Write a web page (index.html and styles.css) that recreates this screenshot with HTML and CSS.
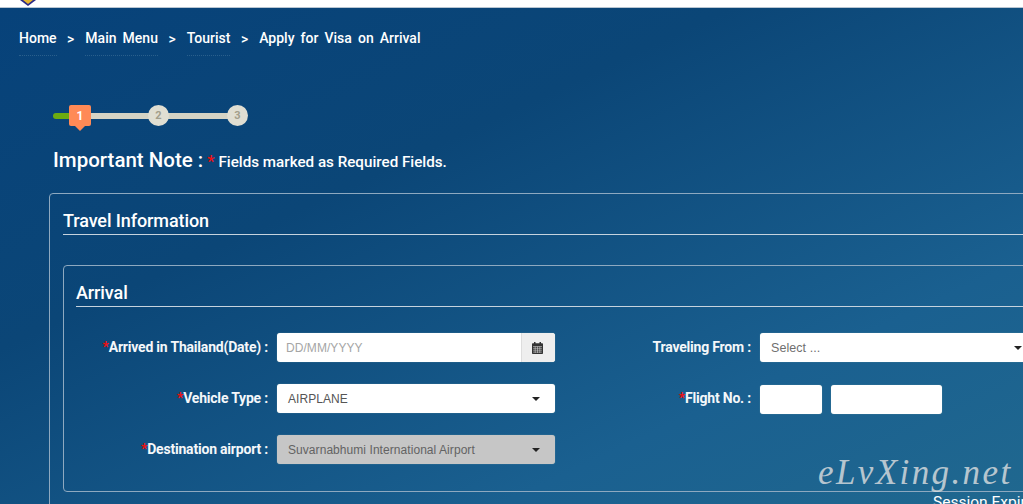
FILE: index.html
```html
<!DOCTYPE html>
<html lang="en">
<head>
<meta charset="utf-8">
<title>Apply for Visa on Arrival</title>
<link rel="stylesheet" href="styles.css">
</head>
<body>
<header class="topbar">
  <svg class="crest" width="16" height="6" viewBox="0 0 16 6"><path d="M0 0H16L8 6Z" fill="#2b2a86"/><path d="M3 0H13L8 4Z" fill="#e8b730"/></svg>
</header>
<main class="page">
  <nav class="crumbs">
    <a class="crumb-link">Home</a><span class="sep">&gt;</span>
    <a class="crumb-link">Main Menu</a><span class="sep">&gt;</span>
    <a class="crumb-link">Tourist</a><span class="sep">&gt;</span>
    <span class="crumb">Apply for Visa on Arrival</span>
  </nav>
  <div class="stepper">
    <div class="progress"></div>
    <div class="step step-active">1</div>
    <div class="step step-2">2</div>
    <div class="step step-3">3</div>
  </div>
  <p class="note"><span class="note-title">Important Note :</span> <span class="req">*</span> <span class="note-text">Fields marked as Required Fields.</span></p>
  <section class="panel">
    <h2 class="panel-title">Travel Information</h2>
    <section class="panel inner">
      <h3 class="panel-title small">Arrival</h3>
      <div class="form">
        <div class="col">
          <div class="row">
            <label class="lab"><span class="req">*</span>Arrived in Thailand(Date) :</label>
            <div class="field date"><span class="ph">DD/MM/YYYY</span><span class="addon">
              <svg width="11" height="12" viewBox="0 0 11 12"><path fill="#333" d="M0 2.2C0 1.6.4 1.2 1 1.2h1V0h1.5v1.2h4V0H9v1.2h1c.6 0 1 .4 1 1V11c0 .6-.4 1-1 1H1c-.6 0-1-.4-1-1Z"/><path fill="#e6e6e6" d="M1 4.2h9v.5H1Z"/><path stroke="#e6e6e6" stroke-width=".5" fill="none" d="M1 6.3h9M1 8.2h9M1 10.1h9M3.2 4.5V11M5.5 4.5V11M7.8 4.5V11"/></svg>
            </span></div>
          </div>
          <div class="row">
            <label class="lab"><span class="req">*</span>Vehicle Type :</label>
            <div class="field select"><span>AIRPLANE</span><i class="caret"></i></div>
          </div>
          <div class="row">
            <label class="lab"><span class="req">*</span>Destination airport :</label>
            <div class="field select disabled"><span>Suvarnabhumi International Airport</span><i class="caret"></i></div>
          </div>
        </div>
        <div class="col col-right">
          <div class="row">
            <label class="lab lab-right">Traveling From :</label>
            <div class="field select wide"><span class="ph-dark">Select ...</span><i class="caret"></i></div>
          </div>
          <div class="row">
            <label class="lab lab-right"><span class="req">*</span>Flight No. :</label>
            <div class="field short"></div>
            <div class="field medium"></div>
          </div>
        </div>
      </div>
    </section>
  </section>
  <div class="session">Session Expired</div>
  <div class="watermark">eLvXing.net</div>
</main>
</body>
</html>
```
FILE: styles.css
```css
* { box-sizing: border-box; }
html, body { margin: 0; height: 504px; overflow: hidden; }
body { font-family: Roboto, "Liberation Sans", sans-serif; color: #fff; width: 1023px; }
.topbar { height: 8px; background: #fff; border-bottom: 1px solid #b9c6d2; padding-left: 20px; }
.crest { display: block; }
.page { position: relative; height: 496px; padding: 0 0 0 49px; background: linear-gradient(155deg, #07427a 0%, #0b4677 35%, #1a6090 75%, #20688f 100%); overflow: hidden; }
.crumbs { display: flex; align-items: flex-start; margin-left: -30px; padding-top: 20px; height: 97px; font-size: 14px; font-weight: 500; line-height: 20px; word-spacing: 2.6px; }
.crumb-link { border-bottom: 1px dotted #2a5f8c; height: 28px; }
.sep { margin: 1px 11px 0 10.5px; }
.stepper { position: relative; width: 196px; height: 21px; margin-left: 4px; }
.progress { position: absolute; left: 0; right: 2px; top: 8px; height: 6px; border-radius: 3px; background: linear-gradient(90deg, #6cab10 0 20px, #d5d3c4 20px); }
.step { position: absolute; top: 0; width: 21px; height: 21px; border-radius: 50%; background: #e0ded2; color: #a39f8c; font-size: 11px; font-weight: 700; text-align: center; line-height: 21px; }
.step-2 { left: 95px; }
.step-3 { left: 174px; }
.step-active { left: 16px; width: 22px; border-radius: 2px; background: #ff8a56; color: #fff; font-size: 12px; line-height: 22px; height: 21px; }
.step-active::after { content: ""; position: absolute; left: 6px; top: 21px; border: 5px solid transparent; border-bottom: 0; border-top-color: #ff8a56; }
.note { margin: 20px 0 0 4px; height: 47px; line-height: 28px; white-space: nowrap; }
.note-title { font-size: 20.5px; font-weight: 500; }
.note-text { font-size: 15.2px; font-weight: 500; }
.req { color: #f00f0f; font-weight: 700; }
.panel { border: 1px solid #8ea9c0; border-radius: 4px; width: 1100px; padding: 12px 13px 0; height: 400px; }
.panel-title { margin: 0; font-size: 18px; font-weight: 500; line-height: 30px; height: 29px; border-bottom: 1px solid #c6d3de; letter-spacing: -.1px; }
.inner { margin-top: 30px; width: 1060px; height: 227px; padding: 12px 12px 0; }
.small { line-height: 29px; }
.form { display: flex; margin-top: 26px; }
.col { width: 479px; }
.col-right { width: auto; margin-left: 5px; }
.row { display: flex; align-items: flex-start; height: 51px; }
.lab { width: 192px; margin-right: 9px; padding-top: 6px; font-size: 14px; font-weight: 700; line-height: 16px; text-align: right; white-space: nowrap; letter-spacing: -.2px; color: #f4f7fa; }
.lab-right { width: 191px; margin-right: 9px; }
.field { height: 29px; background: #fff; border-radius: 3px; color: #555; font-family: "Liberation Sans", sans-serif; font-size: 12px; letter-spacing: .06px; line-height: 28px; display: flex; justify-content: space-between; align-items: center; box-shadow: 0 0 1px #8aa; }
.date { width: 278px; padding-left: 9px; }
.ph { color: #a5a5a5; }
.ph-dark { color: #6f6f6f; font-size: 12.5px; }
.addon { width: 34px; height: 29px; padding-right: 2px; background: #eeeeee; border-left: 1px solid #ddd; border-radius: 0 3px 3px 0; display: flex; align-items: center; justify-content: center; }
.select { width: 278px; padding: 0 15px 0 11px; }
.disabled { background: #c6c6c6; color: #636363; }
.caret { width: 0; height: 0; border: 4px solid transparent; border-top-color: #222; border-bottom: 0; }
.wide { width: 277px; }
.short { width: 62px; margin: 1px 9px 0 0; }
.medium { width: 111px; margin-top: 1px; }
.session { position: absolute; left: 933px; top: 485px; font-size: 15.5px; line-height: 18px; white-space: nowrap; }
.watermark { position: absolute; left: 818px; top: 443px; font-family: "Liberation Serif", serif; font-style: italic; font-size: 35px; line-height: 44px; letter-spacing: 2.4px; color: rgba(225,225,225,.8); white-space: nowrap; }
```
